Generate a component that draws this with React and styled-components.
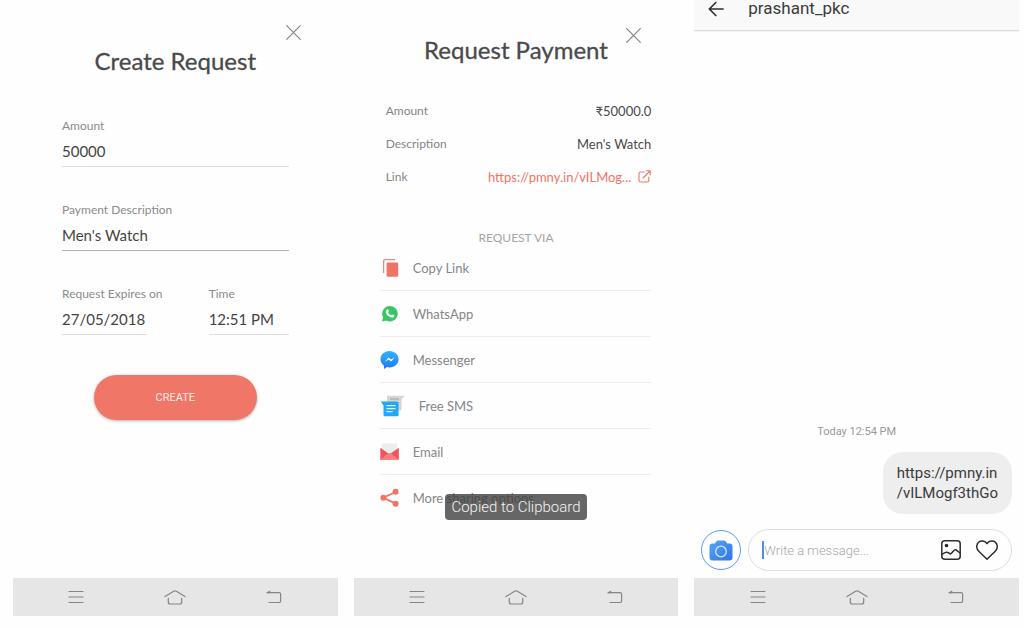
import React, { useId } from "react";
import styled, { createGlobalStyle } from "styled-components";

const lato = '"Lato", "Open Sans", sans-serif';
const roboto = '"Roboto", "Liberation Sans", sans-serif';

const GlobalStyle = createGlobalStyle`
  *, *::before, *::after { box-sizing: border-box; }
  body { margin: 0; background: #fefefe; font-family: ${lato}; color: #4a4a4a; }
  button, input { font: inherit; color: inherit; }
  h1, dl, dd, p { margin: 0; }
`;

const Page = styled.main`
  display: grid;
  grid-template-columns: repeat(3, minmax(0, 1fr));
  gap: 16px;
  min-height: 100vh;
  padding: 0 5px 12px 13px;
`;

const Phone = styled.section`
  position: relative;
  display: flex;
  flex-direction: column;
`;

const SheetHeader = styled.header`
  display: grid;
  grid-template-columns: 1fr auto 1fr;
  padding: ${(p) => p.$top}px 37px 0;
`;

const Title = styled.h1`
  grid-column: 2;
  margin-top: ${(p) => p.$drop}px;
  font-size: 24px;
  line-height: 32px;
  font-weight: 400;
  white-space: nowrap;
  -webkit-text-stroke: 0.3px currentColor;
`;

const IconButton = styled.button`
  display: flex;
  align-items: center;
  justify-content: center;
  width: ${(p) => p.$size}px;
  height: ${(p) => p.$size}px;
  padding: 0;
  border: 0;
  background: none;
  color: ${(p) => p.$color || "#858585"};
  cursor: pointer;
`;

const CloseButton = styled(IconButton)`
  justify-self: end;
`;

const Form = styled.form`
  display: flex;
  flex-direction: column;
  gap: 35px;
  padding: 41px 49px 0;
`;

const FieldBox = styled.div`
  display: flex;
  flex-direction: column;
  width: ${(p) => p.$width || "100%"};
`;

const FieldLabel = styled.label`
  font-size: 12px;
  line-height: 16px;
  color: #8b8b8b;
  white-space: nowrap;
`;

const FieldInput = styled.input`
  width: 100%;
  height: 33px;
  padding: 2px 0 0;
  border: 0;
  border-bottom: 1px solid ${(p) => (p.$active ? "#b4b4b4" : "#dedede")};
  border-radius: 0;
  outline: 0;
  background: none;
  font-size: 15px;
  color: #444;
`;

const FieldRow = styled.div`
  display: flex;
  justify-content: space-between;
`;

const CreateButton = styled.button`
  align-self: center;
  width: 163px;
  height: 45px;
  margin-top: 5px;
  border: 0;
  border-radius: 23px;
  background: #f07767;
  box-shadow: 0 1px 3px rgba(0, 0, 0, 0.3);
  font-family: ${roboto};
  font-size: 11px;
  color: #fdeae7;
  cursor: pointer;
`;

const Details = styled.dl`
  padding: 28px 27px 0 32px;
`;

const DetailRow = styled.div`
  display: flex;
  align-items: center;
  justify-content: space-between;
  height: 33px;

  dt { font-size: 12px; color: #858585; }
  dd { font-size: 13px; }
`;

const PayLink = styled.a`
  display: flex;
  align-items: center;
  gap: 7px;
  color: #ee7466;
  text-decoration: none;
`;

const ShareHeading = styled.p`
  margin-top: 38px;
  font-size: 12px;
  line-height: 14px;
  text-align: center;
  color: #a5a5a5;
`;

const ShareList = styled.div`
  display: flex;
  flex-direction: column;
  padding: 0 27px 0 26px;
`;

const ShareItem = styled.button`
  display: flex;
  align-items: center;
  gap: 14px;
  height: 46px;
  padding: 0;
  border: 0;
  border-bottom: 1px solid #ededed;
  background: none;
  font-size: 13px;
  color: #868686;
  text-align: left;
  cursor: pointer;

  &:last-child { border-bottom-color: transparent; }
`;

const Toast = styled.div`
  position: absolute;
  right: 0;
  bottom: 96px;
  left: 0;
  width: fit-content;
  margin: 0 auto;
  padding: 0 6px;
  border-radius: 4px;
  background: rgba(64, 64, 64, 0.8);
  font-family: ${roboto};
  font-size: 15px;
  font-weight: 300;
  line-height: 26px;
  color: #f4f4f4;
  white-space: nowrap;
`;

const ChatHeader = styled.header`
  display: flex;
  align-items: flex-start;
  gap: 23px;
  height: 31px;
  padding-left: 13px;
  border-bottom: 1px solid #dcdcdc;
  background: #f9f9f9;
  box-shadow: 0 1px 1px rgba(0, 0, 0, 0.04);
`;

const ChatName = styled.h1`
  font-family: ${roboto};
  font-size: 17px;
  line-height: 16px;
  font-weight: 400;
  color: #3c3c3c;
`;

const Thread = styled.div`
  display: flex;
  flex-direction: column;
  margin-top: auto;
  padding: 0 7px;
  font-family: ${roboto};
`;

const Stamp = styled.p`
  font-size: 11px;
  line-height: 16px;
  text-align: center;
  color: #999;
`;

const Bubble = styled.p`
  align-self: flex-end;
  margin-top: 12px;
  padding: 11px 14px;
  border-radius: 20px;
  background: #eee;
  font-size: 15px;
  line-height: 20px;
  color: #3a3a3a;
`;

const Composer = styled.form`
  display: flex;
  align-items: center;
  gap: 7px;
  padding: 15px 7px 7px;
`;

const CameraButton = styled(IconButton)`
  border: 1px solid #5a9cf0;
  border-radius: 50%;
`;

const MessageBox = styled.div`
  display: flex;
  flex: 1;
  align-items: center;
  gap: 12px;
  min-width: 0;
  height: 42px;
  padding: 0 12px 0 13px;
  border: 1px solid #dedede;
  border-radius: 21px;
`;

const MessageInput = styled.input`
  flex: 1;
  min-width: 0;
  height: 18px;
  padding: 0;
  border: 0;
  border-left: 2px solid #4a90e8;
  outline: 0;
  background: none;
  font-family: ${roboto};
  font-size: 13px;
  font-weight: 300;

  &::placeholder { color: #a8a8a8; opacity: 1; }
`;

const NavBar = styled.nav`
  display: flex;
  align-items: center;
  justify-content: center;
  gap: 75px;
  height: 38px;
  margin-top: ${(p) => (p.$attached ? "0" : "auto")};
  background: #e6e6e6;
`;

const stroke = { fill: "none", stroke: "currentColor", strokeLinecap: "round", strokeLinejoin: "round" };

function CloseIcon() {
  return (
    <svg width="15" height="15" viewBox="0 0 15 15" {...stroke} strokeWidth="1.2">
      <path d="M.7.7l13.6 13.6M14.3.7L.7 14.3" />
    </svg>
  );
}

function SystemNav({ attached }) {
  return (
    <NavBar $attached={attached} aria-label="System">
      <IconButton $size={24} aria-label="Recent apps">
        <svg width="16" height="14" viewBox="0 0 16 14" {...stroke} strokeWidth="1.2">
          <path d="M1 1.5h14M1 7h14M1 12.5h14" />
        </svg>
      </IconButton>
      <IconButton $size={24} aria-label="Home">
        <svg width="22" height="15" viewBox="0 0 22 15" {...stroke} strokeWidth="1.2">
          <path d="M1 6.6L9.6 1.3Q11 .6 12.4 1.3L21 6.6M4.3 8.4V12Q4.3 14 6.3 14H15.7Q17.7 14 17.7 12V8.4" />
        </svg>
      </IconButton>
      <IconButton $size={24} aria-label="Back">
        <svg width="16" height="14" viewBox="0 0 16 14" {...stroke} strokeWidth="1.2">
          <path d="M1.2 2.6H13Q14.6 2.6 14.6 4V10.9Q14.6 12.5 13 12.5H3" />
          <path d="M1 2.6L4 .9V2.6Z" fill="currentColor" strokeWidth=".6" />
        </svg>
      </IconButton>
    </NavBar>
  );
}

function Field({ label, value, width, active }) {
  const id = useId();
  return (
    <FieldBox $width={width}>
      <FieldLabel htmlFor={id}>{label}</FieldLabel>
      <FieldInput id={id} defaultValue={value} $active={active} />
    </FieldBox>
  );
}

const CopyIcon = () => (
  <svg width="19" height="20" viewBox="0 0 19 20">
    <path d="M3.6 14.6V3.2Q3.6 1.6 5.2 1.6H14.6" fill="none" stroke="#ee8a7d" strokeWidth="1.3" strokeLinecap="round" />
    <rect x="6.6" y="4.4" width="11.6" height="14.4" rx="1.4" fill="#ee7565" />
  </svg>
);

const WhatsAppIcon = () => (
  <svg width="19" height="20" viewBox="0 0 19 20">
    <path d="M10 2a7.7 7.7 0 1 1-3.8 14.4L2 17.6l1.2-4.1A7.7 7.7 0 0 1 10 2Z" fill="#34c762" />
    <path d="M7 5.5c.5-.4 1-.3 1.2.2l.7 1.5c.1.4-.1.7-.7 1.3.6 1.3 1.6 2.2 3 2.8.6-.8.9-1 1.3-.8l1.5.8c.5.3.4.7.2 1.2-.5 1.1-1.7 1.4-2.9 1.1-2.9-.7-5.3-3.1-5.5-5.6-.1-1 .5-2 1.2-2.5Z" fill="#fff" />
  </svg>
);

const MessengerIcon = () => (
  <svg width="19" height="20" viewBox="0 0 19 20">
    <defs>
      <linearGradient id="messenger-fill" x1="0" y1="0" x2="0" y2="1">
        <stop offset="0" stopColor="#2fb4fb" />
        <stop offset="1" stopColor="#2478f4" />
      </linearGradient>
    </defs>
    <path d="M9.5 1C14.6 1 18.6 4.6 18.6 9.2S14.6 17.4 9.5 17.4Q8.2 17.4 7.1 17.1L4 18.9V15.7C1.9 14.2.5 11.9.5 9.2.5 4.6 4.4 1 9.5 1Z" fill="url(#messenger-fill)" />
    <path d="M4.8 11.7L8.5 7.5l2.3 2.1 3.9-2-3.7 4-2.3-2Z" fill="#fff" />
  </svg>
);

const SmsIcon = () => (
  <svg width="25" height="22" viewBox="0 0 25 22">
    <path d="M7 .8H24.6L21.6 4.5V14.3Q21.6 15.6 20.3 15.6H8.3Q7 15.6 7 14.3Z" fill="#d5d5d8" />
    <path d="M10 4h9" stroke="#aaa" strokeWidth="1.2" />
    <path d="M.8 6.5H17Q18.6 6.5 18.6 8V19.7Q18.6 21.3 17 21.3H5Q3.5 21.3 3.5 19.7V10.5Z" fill="#1faaf1" />
    <path d="M6.5 10.6h9M6.5 13.6h9M6.5 16.6h6" stroke="#e9f7ff" strokeWidth="1.4" />
  </svg>
);

const EmailIcon = () => (
  <svg width="19" height="20" viewBox="0 0 19 20">
    <path d="M1.8 1.5H17.2V12H1.8Z" fill="#ededed" />
    <path d="M.5 6L9.5 12.5 18.6 6V17.8H.5Z" fill="#fb5f62" />
    <path d="M.5 6L9.5 12.5.5 17.8ZM18.6 6L9.5 12.5 18.6 17.8Z" fill="#f4545b" />
    <path d="M.5 17.8L8 11.5Q9.5 10.7 11 11.5L18.6 17.8Z" fill="#f98080" />
  </svg>
);

const ShareIcon = () => (
  <svg width="19" height="20" viewBox="0 0 19 20" fill="#ee7565">
    <path d="M15.6 4L3.4 9.8 15.6 15.6" fill="none" stroke="#ee7565" strokeWidth="1.8" />
    <circle cx="15.6" cy="3.8" r="3" />
    <circle cx="3.4" cy="9.8" r="3" />
    <circle cx="15.6" cy="15.8" r="3" />
  </svg>
);

const shareTargets = [
  ["Copy Link", CopyIcon],
  ["WhatsApp", WhatsAppIcon],
  ["Messenger", MessengerIcon],
  ["Free SMS", SmsIcon],
  ["Email", EmailIcon],
  ["More sharing options", ShareIcon],
];

function CreateRequest() {
  return (
    <Phone>
      <SheetHeader $top={25}>
        <Title $drop={20}>Create Request</Title>
        <CloseButton $size={15} aria-label="Close"><CloseIcon /></CloseButton>
      </SheetHeader>
      <Form onSubmit={(e) => e.preventDefault()}>
        <Field label="Amount" value="50000" />
        <Field label="Payment Description" value="Men's Watch" active />
        <FieldRow>
          <Field label="Request Expires on" value="27/05/2018" width="85px" />
          <Field label="Time" value="12:51 PM" width="80px" />
        </FieldRow>
        <CreateButton>CREATE</CreateButton>
      </Form>
      <SystemNav />
    </Phone>
  );
}

function RequestPayment() {
  return (
    <Phone>
      <SheetHeader $top={28}>
        <Title $drop={6}>Request Payment</Title>
        <CloseButton $size={15} aria-label="Close"><CloseIcon /></CloseButton>
      </SheetHeader>
      <Details>
        <DetailRow><dt>Amount</dt><dd>₹50000.0</dd></DetailRow>
        <DetailRow><dt>Description</dt><dd>Men's Watch</dd></DetailRow>
        <DetailRow>
          <dt>Link</dt>
          <dd>
            <PayLink href="#link">
              https://pmny.in/vILMog...
              <svg width="13" height="13" viewBox="0 0 13 13" {...stroke} strokeWidth="1.1">
                <path d="M6 2H2.600Q1 2 1 3.600V10.400Q1 12 2.600 12H9.200Q10.800 12 10.800 10.400V7M5 8L12 1M8.300.8H12.200V4.700" />
              </svg>
            </PayLink>
          </dd>
        </DetailRow>
      </Details>
      <ShareHeading>REQUEST VIA</ShareHeading>
      <ShareList>
        {shareTargets.map(([name, Icon]) => (
          <ShareItem key={name}><Icon />{name}</ShareItem>
        ))}
      </ShareList>
      <Toast role="status">Copied to Clipboard</Toast>
      <SystemNav />
    </Phone>
  );
}

function Chat() {
  return (
    <Phone>
      <ChatHeader>
        <IconButton $size={18} $color="#2e2e2e" aria-label="Back">
          <svg width="16" height="16" viewBox="0 0 16 16" {...stroke} strokeWidth="1.7">
            <path d="M15 8H1.500M7.800 1.500L1.300 8 7.800 14.500" />
          </svg>
        </IconButton>
        <ChatName>prashant_pkc</ChatName>
      </ChatHeader>
      <Thread>
        <Stamp>Today 12:54 PM</Stamp>
        <Bubble>https://pmny.in<br />/vILMogf3thGo</Bubble>
      </Thread>
      <Composer onSubmit={(e) => e.preventDefault()}>
        <CameraButton type="button" $size={40} aria-label="Camera">
          <svg width="24" height="21" viewBox="0 0 24 21">
            <defs>
              <linearGradient id="camera-fill" x1="0" y1="0" x2="1" y2="1">
                <stop offset="0" stopColor="#5aa6f6" />
                <stop offset="1" stopColor="#2e74ea" />
              </linearGradient>
            </defs>
            <path d="M3.500 3.500H5.800L7.200 1.500Q7.700.5 9 .5H15Q16.300.5 16.800 1.500L18.200 3.500H20.500Q23.500 3.500 23.500 6.500V17.500Q23.500 20.500 20.500 20.500H3.500Q.5 20.500.5 17.500V6.500Q.5 3.500 3.500 3.500Z" fill="url(#camera-fill)" />
            <circle cx="12" cy="11.500" r="5.300" fill="none" stroke="#d5e7ff" strokeWidth="1.300" />
          </svg>
        </CameraButton>
        <MessageBox>
          <MessageInput aria-label="Message" placeholder="Write a message..." />
          <IconButton type="button" $size={24} $color="#2e2e2e" aria-label="Gallery">
            <svg width="20" height="20" viewBox="0 0 20 20" {...stroke} strokeWidth="1.5">
              <rect x=".8" y=".8" width="18.4" height="18.4" rx="3" />
              <path d="M1 14.500Q3.500 12.300 5.500 12.200T9.300 14Q10.500 13.600 12 11.500T15 9.800L19 13" />
              <circle cx="5.500" cy="5.500" r="1.100" fill="currentColor" />
            </svg>
          </IconButton>
          <IconButton type="button" $size={24} $color="#2e2e2e" aria-label="Like">
            <svg width="22" height="20" viewBox="0 0 22 20" {...stroke} strokeWidth="1.5">
              <path d="M11 19.200L3 11.500C.9 9.400.5 7.700.8 5.800 1.300 2.900 3.500.9 6.200.9 8.300.9 9.900 1.900 11 3.700 12.100 1.900 13.700.9 15.800.9 18.500.9 20.700 2.900 21.200 5.800 21.500 7.700 21.100 9.400 19 11.500Z" />
            </svg>
          </IconButton>
        </MessageBox>
      </Composer>
      <SystemNav attached />
    </Phone>
  );
}

export default function App() {
  return (
    <>
      <GlobalStyle />
      <Page>
        <CreateRequest />
        <RequestPayment />
        <Chat />
      </Page>
    </>
  );
}
